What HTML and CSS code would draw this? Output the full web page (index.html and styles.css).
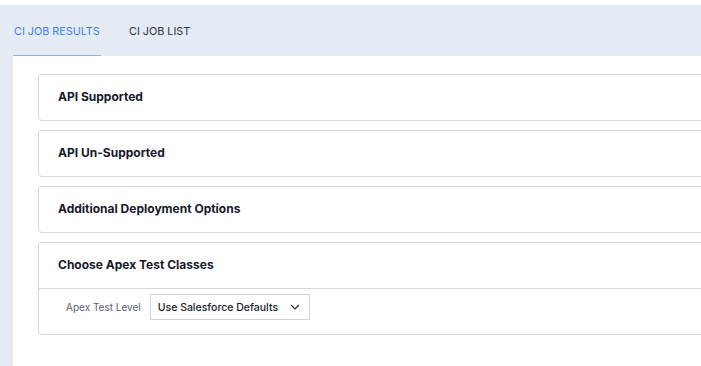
FILE: index.html
```html
<!DOCTYPE html>
<html>
<head>
<meta charset="utf-8">
<link rel="stylesheet" href="styles.css">
</head>
<body>
<div class="app">
  <nav class="tabs">
    <div class="tab active">CI JOB RESULTS</div>
    <div class="tab">CI JOB LIST</div>
  </nav>
  <main class="panel">
    <section class="card"><div class="card-head">API Supported</div></section>
    <section class="card"><div class="card-head">API Un-Supported</div></section>
    <section class="card"><div class="card-head">Additional Deployment Options</div></section>
    <section class="card">
      <div class="card-head">Choose Apex Test Classes</div>
      <div class="card-body">
        <label class="field-label">Apex Test Level</label>
        <div class="select">
          <span>Use Salesforce Defaults</span>
          <svg class="chev" width="10" height="6" viewBox="0 0 10 6"><path d="M1 1l4 4 4-4" fill="none" stroke="#2a2d3a" stroke-width="1.2"/></svg>
        </div>
      </div>
    </section>
  </main>
</div>
</body>
</html>
```
FILE: styles.css
```css
html, body {
  margin: 0;
  padding: 0;
  background: #ffffff;
  overflow: hidden;
}
body {
  font-family: Inter, "Open Sans", Arial, sans-serif;
  padding-top: 5px;
}
.app {
  background: #e4ebf3;
  width: 760px;
  height: 361px;
  padding-left: 13px;
  box-sizing: border-box;
  display: flex;
  flex-direction: column;
}
.tabs {
  display: flex;
  height: 51px;
  align-items: stretch;
}
.tab {
  font-size: 10.8px;
  color: #2f3240;
  display: flex;
  align-items: center;
  padding: 2px 0 0 1px;
  white-space: nowrap;
}
.tab.active {
  color: #3f7ff0;
  border-bottom: 1px solid #8db5ec;
  padding-top: 3px;
  width: 87px;
  margin-right: 27px;
}
.panel {
  background: #ffffff;
  flex: 1;
  padding: 18px 0 0 25px;
  display: flex;
  flex-direction: column;
  gap: 9px;
}
.card {
  border: 1px solid #d6d6de;
  border-radius: 4px;
  background: #fff;
}
.card-head {
  height: 43px;
  line-height: 43px;
  padding-bottom: 2px;
  padding-left: 19px;
  font-size: 12px;
  font-weight: 700;
  color: #16192b;
}
.card:last-child .card-head {
  border-bottom: 1px solid #d6d6de;
}
.card-body {
  display: flex;
  align-items: center;
  padding: 5px 0 14px 27px;
}
.field-label {
  font-size: 10px;
  color: #5b6070;
  margin-right: 9px;
}
.select {
  width: 160px;
  height: 26px;
  box-sizing: border-box;
  border: 1px solid #d2d4dc;
  display: flex;
  align-items: center;
  padding-left: 7px;
  font-size: 10.5px;
  font-weight: 500;
  color: #1a1d2c;
}
.select span { flex: 1; }
.chev { margin-right: 9px; }
```
